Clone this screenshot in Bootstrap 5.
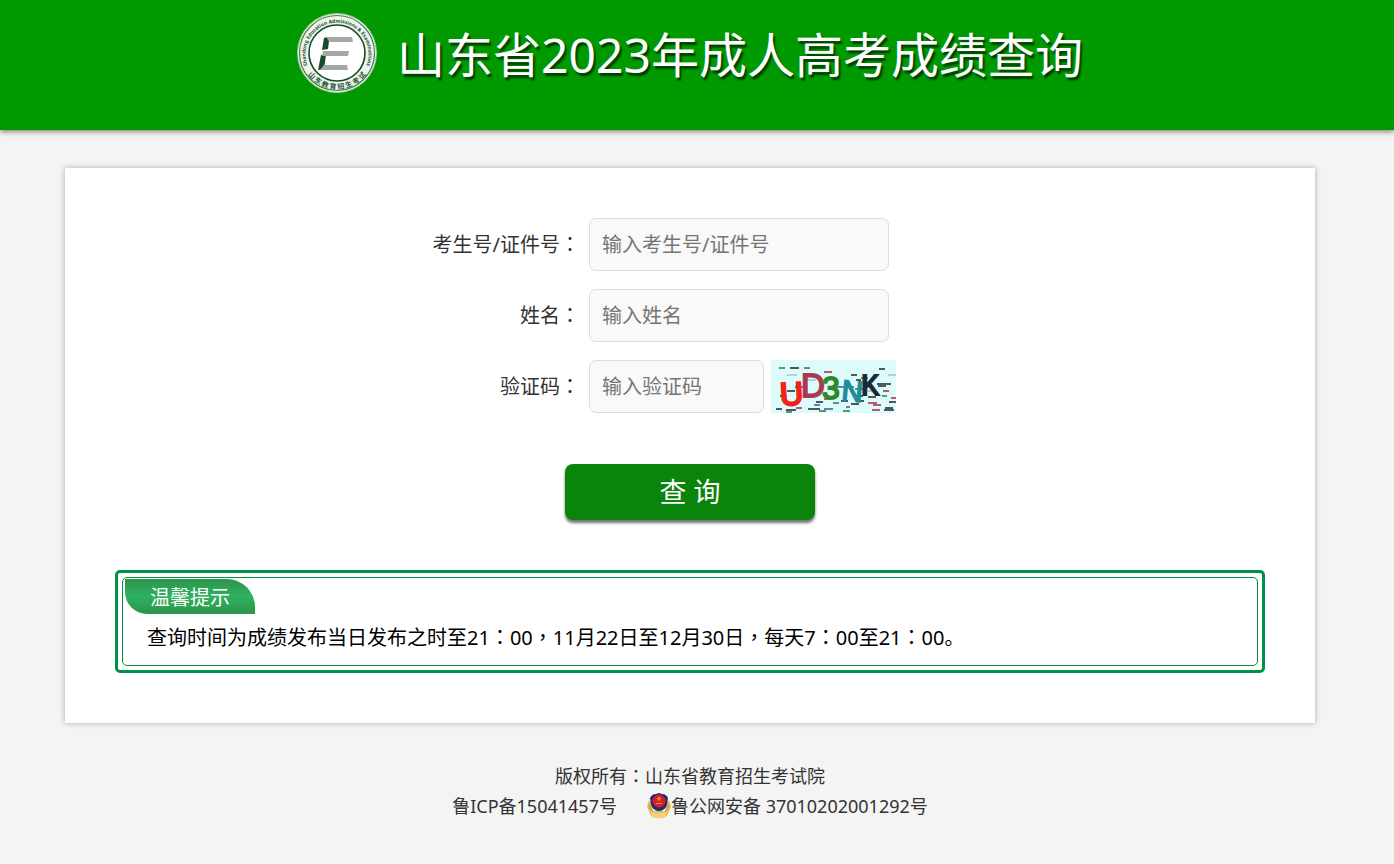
<!DOCTYPE html>
<html lang="zh-CN">
<head>
<meta charset="utf-8">
<meta name="viewport" content="width=device-width, initial-scale=1">
<title>山东省2023年成人高考成绩查询</title>
<link href="https://cdn.jsdelivr.net/npm/bootstrap@5.3.0/dist/css/bootstrap.min.css" rel="stylesheet">
<style>
  body { background: #f4f4f4; color: #333; font-family: "Noto Sans", "Noto Sans CJK SC", sans-serif; font-size: 20px; line-height: 30px; }
  .punct { font-family: "Noto Sans CJK TC", sans-serif; }
  .site-head, .site-main, .site-foot { padding-right: 14px; }
  .site-head { background: #009900; min-height: 130px; padding-top: 12px; box-shadow: 0 2px 5px rgba(0,0,0,.45); }
  .site-head h1 { font-size: 48px; line-height: 86px; color: #fff; text-shadow: 2px 3px 2px rgba(0,0,0,.6); }
  .panel { max-width: 1250px; margin-top: 38px; padding: 50px; background: #fff; box-shadow: 0 0 6px rgba(0,0,0,.3); }
  .query-form { max-width: 520px; }
  .field-line { gap: 9px; margin-bottom: 18px; }
  .field-line label { width: 150px; color: #333; }
  .field-line .form-control { width: 300px; height: 53px; padding: 6px 12px; font-size: 20px; background: #f9f9f9; border-color: #ddd; border-radius: 7px; }
  .field-line .form-control::placeholder { color: #757575; }
  .field-line .code-input { width: 175px; }
  .captcha { margin-left: -2px; }
  .btn-query { width: 250px; height: 56px; margin-top: 51px; font-size: 27px; line-height: 40px; padding: 8px; color: #fff; background: #0b840b; border: 0; border-radius: 8px; box-shadow: 0 3px 3px rgba(0,0,0,.55); }
  .btn-query:hover { background: #086f08; color: #fff; }
  .tips { margin-top: 50px; padding: 4px; border: 3px solid #009144; border-radius: 5px; }
  .tips-inner { min-height: 89px; padding: 1px 2px 11px; border: 1px solid #009144; border-radius: 5px; color: #000; }
  .tips-title { width: 130px; height: 35px; font-size: 20px; line-height: 38px; color: #fff; background: linear-gradient(#2c9448, #2fb162 50%, #2c9448); border-radius: 0 28px 0 22px; }
  .tips-text { padding: 8px 22px 0; }
  .site-foot { margin-top: 37px; padding-bottom: 42px; font-size: 18px; }
  .site-foot a { color: #333; text-decoration: none; }
  .records { gap: 30px; }
</style>
</head>
<body>
<header class="site-head">
  <div class="d-flex justify-content-center align-items-start">
    <svg class="flex-shrink-0 me-3" width="84" height="82" viewBox="1 0 84 82" role="img" aria-label="山东省教育招生考试院">
      <defs>
        <path id="arcTop" d="M15 60 A31.500 31.500 0 1 1 67 60"/>
        <path id="arcLow" d="M6 51 A36.500 36.500 0 0 0 76 51"/>
      </defs>
      <circle cx="41" cy="41" r="39.500" fill="#eef3ec" stroke="#a7c9a4"/>
      <circle cx="41" cy="41" r="37.500" fill="none" stroke="#4c7f52" stroke-width="1.200"/>
      <circle cx="41" cy="41" r="28" fill="#fff" stroke="#124b25" stroke-width="1.600"/>
      <g font-family="Noto Sans" font-weight="700" fill="#1c5430">
        <text font-size="5"><textPath href="#arcTop" startOffset="50%" text-anchor="middle">Shandong Education Admissions &amp; Examinations</textPath></text>
        <text font-size="7" font-family="Noto Sans CJK SC"><textPath href="#arcLow" startOffset="50%" text-anchor="middle">山 东 教 育 招 生 考 试</textPath></text>
      </g>
      <path d="M28 26l3-1 2 4-1 8-6 1z M25 43h5l-2 14-6 1z" fill="#174d2b"/>
      <path d="M30 25h26l1 5H34z M27 39h26l-1 5H26z M28 53h23l1 5H24z" fill="#a4a7a5"/>
    </svg>
    <h1 class="fw-normal mb-0">山东省2023年成人高考成绩查询</h1>
  </div>
</header>

<main class="site-main">
  <div class="panel mx-auto">
    <form class="query-form mx-auto" onsubmit="return false">
      <div class="field-line d-flex align-items-center">
        <label class="text-end text-nowrap" for="examNo">考生号/证件号<span class="punct" lang="zh-TW">：</span></label>
        <input class="form-control" id="examNo" type="text" placeholder="输入考生号/证件号">
      </div>
      <div class="field-line d-flex align-items-center">
        <label class="text-end" for="fullName">姓名<span class="punct" lang="zh-TW">：</span></label>
        <input class="form-control" id="fullName" type="text" placeholder="输入姓名">
      </div>
      <div class="field-line d-flex align-items-center mb-0">
        <label class="text-end" for="code">验证码<span class="punct" lang="zh-TW">：</span></label>
        <input class="form-control code-input" id="code" type="text" placeholder="输入验证码">
        <svg class="captcha flex-shrink-0" width="125" height="53" viewBox="0 0 125 53" role="img" aria-label="验证码图片">
          <rect width="125" height="53" fill="#dcfbf9"/>
          <g fill="none" stroke-width="1.600">
            <path stroke="#1d2430" d="M19 8h9M16 31h8M108 9h6M80 15h6M85 20h5M106 24h14M107 26h8M5 49h6M15 50h10M45 42h7M37 49h12M70 41h7M84 36h8M86 41h7M97 37h8M80 44h8M113 50h10M114 48h8M118 42h7"/>
            <path stroke="#2b7b4b" d="M8 8h6M33 8h6M9 36h7M15 52h6M62 43h6M48 51h7M72 51h7M90 18h7M111 36h5M62 36h6"/>
            <path stroke="#a22c43" d="M53 12h8M9 36h5M97 43h9M102 45h8M101 50h8M25 48h6M112 31h6M53 39h8M120 38h5"/>
            <path stroke="#3559a4" d="M24 27h8M61 27h22M84 29h11M43 45h6M75 47h4M53 49h9"/>
            <path stroke="#a5c5c4" d="M16 15h10M36 20h9M94 31h8M117 15h8M96 24h4"/>
          </g>
          <g font-family="Liberation Sans" stroke-width="1.800">
            <text x="9" y="45" font-size="32" fill="#ee231b" stroke="#ee231b" stroke-width="2.400" transform="rotate(-3 20 34)">U</text>
            <text x="30" y="37" font-size="33" fill="#a83b51" stroke="#a83b51">D</text>
            <text x="51" y="39" font-size="32" fill="#2e8a28" stroke="#2e8a28">3</text>
            <text x="71" y="41" font-size="29" fill="#218c9c" stroke="#218c9c" transform="rotate(5 80 30)">N</text>
            <text x="90" y="35" font-size="30" font-family="Liberation Mono" fill="#1c2a35" stroke="#1c2a35">K</text>
          </g>
        </svg>
      </div>
      <div class="text-center">
        <button class="btn btn-query" type="submit">查 询</button>
      </div>
    </form>

    <section class="tips">
      <div class="tips-inner">
        <h2 class="tips-title fw-normal text-center mb-0">温馨提示</h2>
        <p class="tips-text mb-0">查询时间为成绩发布当日发布之时至21<span class="punct" lang="zh-TW">：</span>00<span class="punct" lang="zh-TW">，</span>11月22日至12月30日<span class="punct" lang="zh-TW">，</span>每天7<span class="punct" lang="zh-TW">：</span>00至21<span class="punct" lang="zh-TW">：</span>00。</p>
      </div>
    </section>
  </div>
</main>

<footer class="site-foot text-center">
  <div>版权所有<span class="punct" lang="zh-TW">：</span>山东省教育招生考试院</div>
  <div class="records d-flex flex-wrap justify-content-center">
    <a href="#">鲁ICP备15041457号</a>
    <a href="#" class="d-flex align-items-center">
      <svg width="24" height="26" viewBox="0 0 24 26" aria-hidden="true">
        <path d="M3 7C-1 11 0 15 2 18l2 5c5 3 11 3 16 0l2-5c2-3 3-7-1-11l-3 11H6z" fill="#e9b75a"/>
        <path d="M4 17c4 4 12 4 16 0l-1 6c-4 3-10 3-14 0z" fill="#f6cf7c"/>
        <path d="M2 12l4 7M22 12l-4 7" stroke="#c98a35" fill="none"/>
        <path d="M12 0l3 1c3 0 5 2 6 4-1 3 0 6-2 9-1 2-4 4-7 4s-6-2-7-4c-2-3-1-6-2-9 1-2 3-4 6-4z" fill="#1d2c77"/>
        <circle cx="12" cy="8" r="6.500" fill="#d8211d"/>
        <path d="M12 3l1 2h2l-2 1 1 2-2-1-2 1 1-2-2-1h2zM9 10h6v1H9z" fill="#f08a3e"/>
      </svg>鲁公网安备 37010202001292号</a>
  </div>
</footer>
<script src="https://cdn.jsdelivr.net/npm/bootstrap@5.3.0/dist/js/bootstrap.bundle.min.js"></script>
</body>
</html>
